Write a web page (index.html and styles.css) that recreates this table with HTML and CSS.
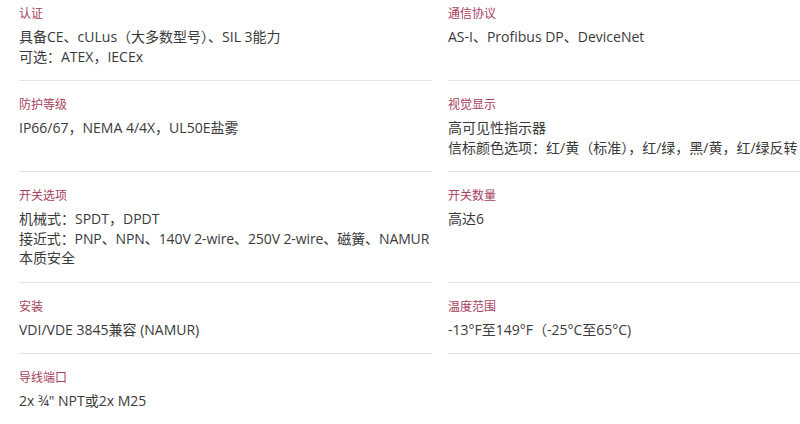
FILE: index.html
```html
<!DOCTYPE html>
<html lang="zh-CN">
<head>
<meta charset="utf-8">
<title>规格</title>
<link rel="stylesheet" href="styles.css">
</head>
<body>
<div class="specs">
  <div class="item">
    <div class="label">认证</div>
    <div class="value">具备CE、cULus（大多数型号）、SIL 3能力<br>可选：ATEX，IECEx</div>
  </div>
  <div class="item">
    <div class="label">通信协议</div>
    <div class="value">AS-I、Profibus DP、DeviceNet</div>
  </div>
  <div class="item">
    <div class="label">防护等级</div>
    <div class="value">IP66/67，NEMA 4/4X，UL50E盐雾</div>
  </div>
  <div class="item">
    <div class="label">视觉显示</div>
    <div class="value">高可见性指示器<br>信标颜色选项：红/黄（标准），红/绿，黑/黄，红/绿反转</div>
  </div>
  <div class="item">
    <div class="label">开关选项</div>
    <div class="value">机械式：SPDT，DPDT<br><span class="tight">接近式：PNP、NPN、140V 2-wire、250V 2-wire、磁簧、NAMUR</span><br>本质安全</div>
  </div>
  <div class="item">
    <div class="label">开关数量</div>
    <div class="value">高达6</div>
  </div>
  <div class="item">
    <div class="label">安装</div>
    <div class="value">VDI/VDE 3845兼容 (NAMUR)</div>
  </div>
  <div class="item">
    <div class="label">温度范围</div>
    <div class="value">-13°F至149°F（-25°C至65°C)</div>
  </div>
  <div class="item">
    <div class="label">导线端口</div>
    <div class="value">2x ¾" NPT或2x M25</div>
  </div>
</div>
</body>
</html>
```
FILE: styles.css
```css
html, body {
  margin: 0;
  padding: 0;
  background: #ffffff;
  overflow: hidden;
}
body {
  font-family: "Open Sans", "Noto Sans CJK SC", sans-serif;
  color: #3a3a3a;
}
.specs {
  display: grid;
  grid-template-columns: 413px 1fr;
  column-gap: 16px;
  padding-left: 19px;
}
.item {
  padding: 16px 0 14px;
  border-bottom: 1px solid #e3e3e3;
}
.item:nth-child(-n+2) {
  padding-top: 6px;
}
.label {
  font-size: 12px;
  line-height: 16px;
  color: #a8405f;
  margin-bottom: 5px;
}
.value {
  font-size: 14px;
  line-height: 19.5px;
  white-space: nowrap;
}
.tight {
  letter-spacing: -0.1px;
}
```
